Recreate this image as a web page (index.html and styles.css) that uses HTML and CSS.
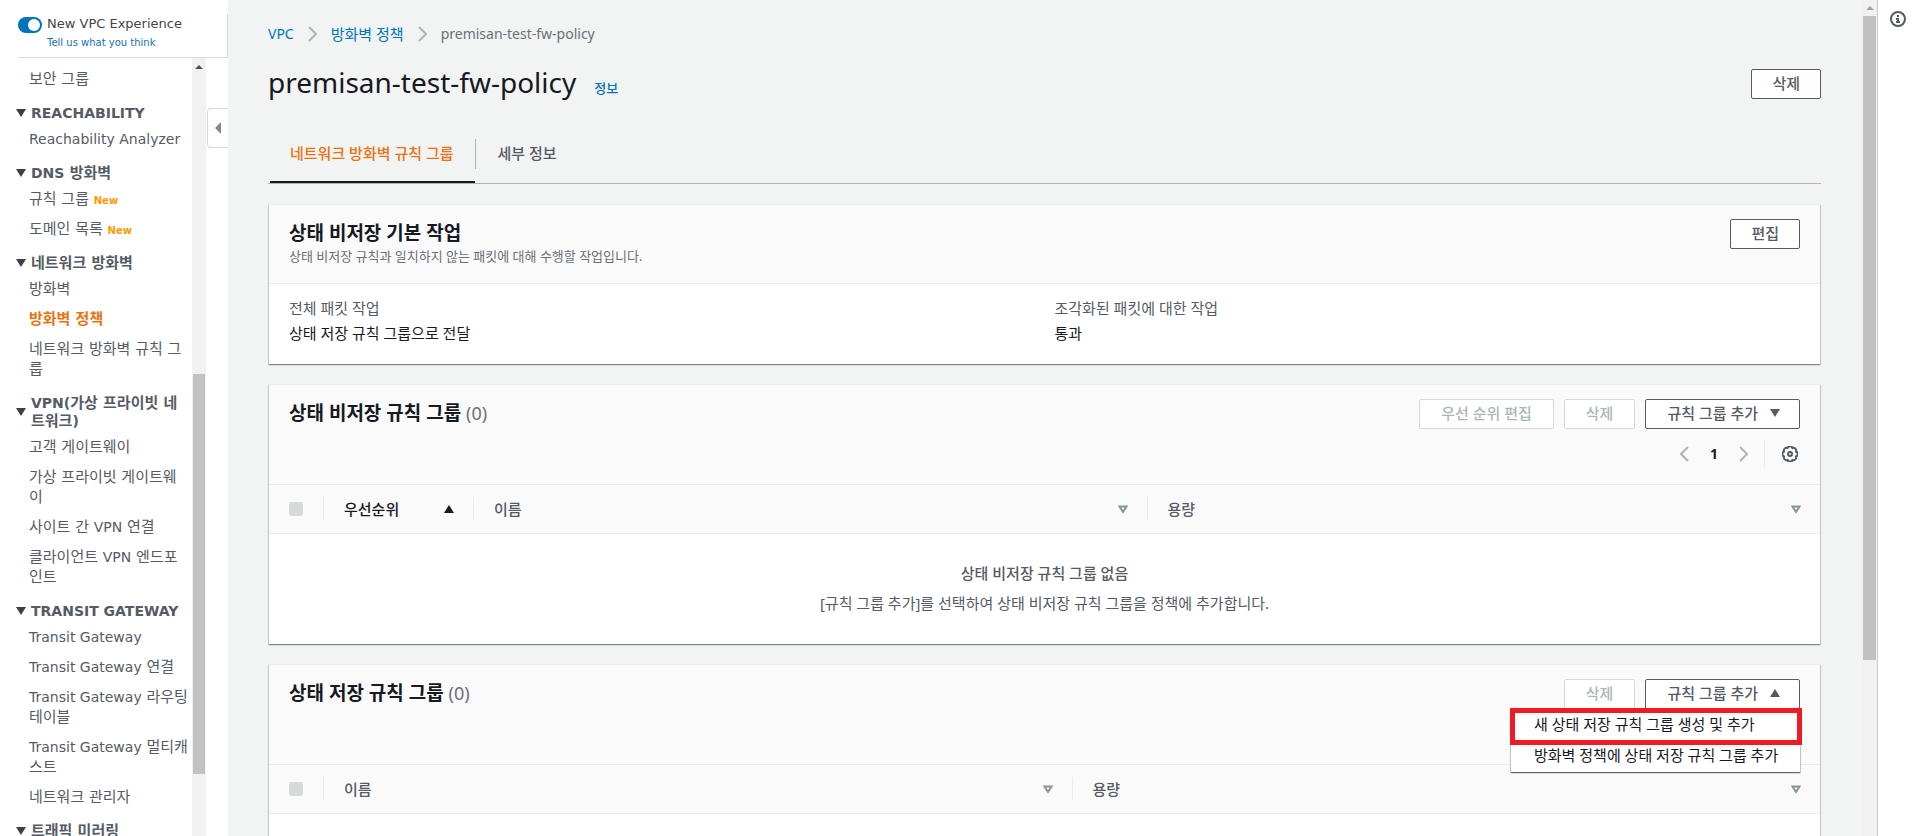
FILE: index.html
```html
<!DOCTYPE html>
<html lang="ko">

<head>
  <meta charset="UTF-8" />
  <meta name="viewport" content="width=device-width, initial-scale=1.0" />
  <title>premisan-test-fw-policy</title>
  <link rel="stylesheet" href="styles.css">
</head>

<body>
  <div class="app">
    <!-- 왼쪽 메뉴 -->
    <aside class="sidebar">
      <div class="side-top">
        <input type="checkbox" class="switch" id="newExp" checked>
        <div>
          <label for="newExp">New VPC Experience</label>
          <a href="#">Tell us what you think</a>
        </div>
      </div>
      <div class="side-body">
        <nav class="side-nav">
          <a href="#">보안 그룹</a>
          <h3><span class="en">REACHABILITY</span></h3>
          <a href="#"><span class="en">Reachability Analyzer</span></a>
          <h3><span><span class="en">DNS</span> 방화벽</span></h3>
          <a href="#">규칙 그룹 <span class="new">New</span></a>
          <a href="#">도메인 목록 <span class="new">New</span></a>
          <h3>네트워크 방화벽</h3>
          <a href="#">방화벽</a>
          <a href="#" class="current">방화벽 정책</a>
          <a href="#">네트워크 방화벽 규칙 그룹</a>
          <h3><span><span class="en">VPN(</span>가상 프라이빗 네트워크<span class="en">)</span></span></h3>
          <a href="#">고객 게이트웨이</a>
          <a href="#">가상 프라이빗 게이트웨이</a>
          <a href="#">사이트 간 <span class="en">VPN</span> 연결</a>
          <a href="#">클라이언트 <span class="en">VPN</span> 엔드포인트</a>
          <h3><span class="en">TRANSIT GATEWAY</span></h3>
          <a href="#"><span class="en">Transit Gateway</span></a>
          <a href="#"><span class="en">Transit Gateway</span> 연결</a>
          <a href="#"><span class="en">Transit Gateway</span> 라우팅 테이블</a>
          <a href="#"><span class="en">Transit Gateway</span> 멀티캐스트</a>
          <a href="#">네트워크 관리자</a>
          <h3>트래픽 미러링</h3>
        </nav>
        <div class="scrollbar side-scroll">
          <i class="arrow"></i>
          <div class="thumb"></div>
        </div>
        <div class="side-edge">
          <button class="collapse" aria-label="메뉴 닫기"></button>
        </div>
      </div>
    </aside>

    <!-- 본문 -->
    <main class="main">
      <nav class="crumbs">
        <a href="#" class="latin">VPC</a>
        <svg width="9" height="16" viewBox="0 0 9 16"><path d="M1 1l7 7-7 7" /></svg>
        <a href="#">방화벽 정책</a>
        <svg width="9" height="16" viewBox="0 0 9 16"><path d="M1 1l7 7-7 7" /></svg>
        <span class="latin">premisan-test-fw-policy</span>
      </nav>

      <div class="title">
        <h1>premisan-test-fw-policy</h1>
        <a href="#">정보</a>
        <button class="btn">삭제</button>
      </div>

      <div class="tabs">
        <button class="tab active">네트워크 방화벽 규칙 그룹</button>
        <button class="tab">세부 정보</button>
      </div>

      <section class="panel">
        <div class="panel-head">
          <div>
            <h2>상태 비저장 기본 작업</h2>
            <p>상태 비저장 규칙과 일치하지 않는 패킷에 대해 수행할 작업입니다.</p>
          </div>
          <button class="btn">편집</button>
        </div>
        <dl class="pairs">
          <div>
            <dt>전체 패킷 작업</dt>
            <dd>상태 저장 규칙 그룹으로 전달</dd>
          </div>
          <div>
            <dt>조각화된 패킷에 대한 작업</dt>
            <dd>통과</dd>
          </div>
        </dl>
      </section>

      <section class="panel">
        <div class="panel-head tall">
          <h2>상태 비저장 규칙 그룹 <span>(0)</span></h2>
          <div class="tools">
            <div class="btns">
              <button class="btn" disabled>우선 순위 편집</button>
              <button class="btn" disabled>삭제</button>
              <button class="btn">규칙 그룹 추가 <i class="caret"></i></button>
            </div>
            <div class="pager">
              <button aria-label="이전"><svg width="9" height="16" viewBox="0 0 9 16"><path d="M8 1L1 8l7 7" /></svg></button>
              <b>1</b>
              <button aria-label="다음"><svg width="9" height="16" viewBox="0 0 9 16"><path d="M1 1l7 7-7 7" /></svg></button>
              <button class="gear" aria-label="설정">
                <svg width="16" height="16" viewBox="-8 -8 16 16">
                  <path d="M-2.500-6A2.700 2.700 0 0 1 2.500-6A2.700 2.700 0 0 1 6-2.500A2.700 2.700 0 0 1 6 2.500A2.700 2.700 0 0 1 2.500 6A2.700 2.700 0 0 1-2.500 6A2.700 2.700 0 0 1-6 2.500A2.700 2.700 0 0 1-6-2.500A2.700 2.700 0 0 1-2.500-6Z" />
                  <circle r="2" />
                </svg>
              </button>
            </div>
          </div>
        </div>
        <table>
          <thead>
            <tr>
              <th class="check"><input type="checkbox" disabled aria-label="모두 선택"></th>
              <th class="priority sorted"><div>우선순위 <i class="caret up"></i></div></th>
              <th><div>이름 <svg width="10" height="9" viewBox="0 0 10 9"><path d="M1.500 1.500h7L5 7z" /></svg></div></th>
              <th><div>용량 <svg width="10" height="9" viewBox="0 0 10 9"><path d="M1.500 1.500h7L5 7z" /></svg></div></th>
            </tr>
          </thead>
          <tbody>
            <tr>
              <td colspan="4">
                <b>상태 비저장 규칙 그룹 없음</b>
                <p>[규칙 그룹 추가]를 선택하여 상태 비저장 규칙 그룹을 정책에 추가합니다.</p>
              </td>
            </tr>
          </tbody>
        </table>
      </section>

      <section class="panel">
        <div class="panel-head tall">
          <h2>상태 저장 규칙 그룹 <span>(0)</span></h2>
          <div class="btns">
            <button class="btn" disabled>삭제</button>
            <div class="dropdown">
              <button class="btn">규칙 그룹 추가 <i class="caret up"></i></button>
              <div class="menu">
                <button class="marked">새 상태 저장 규칙 그룹 생성 및 추가</button>
                <button>방화벽 정책에 상태 저장 규칙 그룹 추가</button>
              </div>
            </div>
          </div>
        </div>
        <table>
          <thead>
            <tr>
              <th class="check"><input type="checkbox" disabled aria-label="모두 선택"></th>
              <th><div>이름 <svg width="10" height="9" viewBox="0 0 10 9"><path d="M1.500 1.500h7L5 7z" /></svg></div></th>
              <th><div>용량 <svg width="10" height="9" viewBox="0 0 10 9"><path d="M1.500 1.500h7L5 7z" /></svg></div></th>
            </tr>
          </thead>
          <tbody>
            <tr>
              <td colspan="3"></td>
            </tr>
          </tbody>
        </table>
      </section>
    </main>

    <div class="scrollbar main-scroll">
      <i class="arrow"></i>
      <div class="thumb"></div>
    </div>

    <!-- 오른쪽 도움말 -->
    <aside class="help">
      <button aria-label="도움말">
        <svg width="16" height="16" viewBox="0 0 16 16">
          <circle cx="8" cy="8" r="7" />
          <path d="M8 4v2M6 8h2v3M6 11h4" />
        </svg>
      </button>
    </aside>
  </div>
</body>

</html>
```
FILE: styles.css
```css
* {
  margin: 0;
  padding: 0;
  box-sizing: border-box;
}

body {
  font-family: "Noto Sans", "Noto Sans CJK KR", sans-serif;
  font-size: 15px;
  line-height: 20px;
  color: #16191f;
  background: #fff;
}

a {
  color: #0073bb;
  text-decoration: none;
}

button {
  font: inherit;
  color: #545b64;
  background: none;
  border: none;
  cursor: pointer;
}

svg {
  display: block;
  fill: none;
  stroke: #aab7b8;
  stroke-width: 2;
}

.app {
  display: flex;
  height: 100vh;
  overflow: hidden;
}

/* 왼쪽 메뉴 */
.sidebar {
  display: flex;
  flex-direction: column;
  flex: 0 0 228px;
  font-family: "DejaVu Sans", "Noto Sans CJK KR", sans-serif;
}

.side-top {
  display: flex;
  gap: 5px;
  height: 44px;
  margin: 14px 0 0 18px;
  border-right: 1px solid #d5dbdb;
  border-bottom: 1px solid #d5dbdb;
}

.side-top label {
  display: block;
  font-size: 13px;
  color: #444;
}

.side-top a {
  display: block;
  font-size: 10px;
  line-height: 18px;
  color: #146eb4;
}

.switch {
  appearance: none;
  flex: none;
  width: 24px;
  height: 16px;
  margin-top: 3px;
  padding: 2px;
  border-radius: 8px;
  background: #0073bb;
}

.switch::before {
  content: "";
  display: block;
  width: 12px;
  height: 12px;
  margin-left: auto;
  border-radius: 50%;
  background: #fff;
}

.side-body {
  display: flex;
  flex: 1;
  min-height: 0;
}

.side-nav {
  flex: 1;
  padding: 6px 2px 0 16px;
  overflow: hidden;
  word-break: break-all;
  color: #545b64;
}

.side-nav a {
  display: block;
  padding: 5px 0 5px 13px;
  color: #545b64;
}

.side-nav a.current {
  font-weight: bold;
  color: #ec7211;
}

.side-nav .en {
  font-size: 14px;
}

.side-nav a .en {
  line-height: 16px;
}

.side-nav .new {
  font-size: 10px;
  font-weight: bold;
  line-height: 12px;
  color: #ff9900;
}

.side-nav h3 {
  display: flex;
  align-items: center;
  gap: 5px;
  padding: 10px 0 2px;
  font-size: 15px;
  line-height: 18px;
}

.side-nav h3::before {
  content: "";
  flex: none;
  border: 5px solid transparent;
  border-top: 8px solid #3b4048;
  border-bottom: 0;
}

.scrollbar {
  display: flex;
  flex-direction: column;
  align-items: center;
  flex: none;
  width: 14px;
  background: #f1f1f1;
}

.arrow {
  margin: 7px 0 5px;
  border: 4px solid transparent;
  border-top: 0;
  border-bottom-color: #505050;
}

.thumb {
  width: 12px;
  background: #c1c1c1;
}

.side-scroll .thumb {
  height: 400px;
  margin-top: 300px;
}

.side-edge {
  width: 22px;
  padding-top: 50px;
}

.collapse {
  display: flex;
  align-items: center;
  justify-content: center;
  width: 21px;
  height: 40px;
  margin-left: 1px;
  border: 1px solid #d5dbdb;
  border-right: 0;
  border-radius: 4px 0 0 4px;
}

.collapse::before {
  content: "";
  border: 6px solid transparent;
  border-left: 0;
  border-right-color: #888;
}

/* 본문 */
.main {
  flex: 1;
  min-width: 0;
  padding: 24px 41px 0 40px;
  overflow: hidden;
  background: #f2f3f3;
}

.crumbs {
  display: flex;
  align-items: center;
  gap: 14px;
  color: #687078;
}

.crumbs .latin {
  font-size: 14px;
}

.title {
  display: flex;
  align-items: center;
  gap: 18px;
  height: 40px;
  margin-top: 20px;
}

.title h1 {
  padding-bottom: 4px;
  font-size: 28px;
  font-weight: normal;
  line-height: 36px;
}

.title a {
  padding-top: 8px;
  font-size: 13px;
  font-weight: 500;
}

.title .btn {
  margin-left: auto;
}

.btn {
  display: flex;
  align-items: center;
  height: 30px;
  padding: 0 20px 2px;
  font-weight: 500;
  background: #fff;
  border: 1px solid #545b64;
  border-radius: 2px;
}

.btns .btn {
  padding: 0 21px 2px;
}

.btn:disabled {
  color: #aab7b8;
  border-color: #d5dbdb;
  cursor: default;
}

.caret {
  margin-left: 12px;
  border: 5px solid transparent;
  border-top: 8px solid #545b64;
  border-bottom: 0;
}

.caret.up {
  border-top: 0;
  border-bottom: 8px solid #545b64;
}

.btn .caret {
  margin-right: -2px;
}

.tabs {
  display: flex;
  height: 60px;
  margin-top: 20px;
  padding-left: 2px;
  border-bottom: 1px solid #aab7b8;
}

.tab {
  height: 30px;
  margin-top: 15px;
  padding: 0 22px 2px;
  font-weight: 500;
}

.tab.active {
  height: 59px;
  margin-top: 0;
  padding: 0 21px 0 20px;
  color: #ec7211;
  border-bottom: 2px solid #16191f;
}

.tab + .tab {
  border-left: 1px solid #aab7b8;
}

.panel {
  margin: 20px 1px 0;
  background: #fff;
  border-top: 1px solid #eaeded;
  box-shadow: 0 1px 1px 0 rgba(0, 28, 36, 0.3), 1px 1px 1px 0 rgba(0, 28, 36, 0.15), -1px 1px 1px 0 rgba(0, 28, 36, 0.15);
}

.panel-head {
  display: flex;
  justify-content: space-between;
  align-items: flex-start;
  min-height: 79px;
  padding: 14px 20px 0;
  background: #fafafa;
  border-bottom: 1px solid #eaeded;
}

.panel-head.tall {
  min-height: 100px;
}

h2 {
  font-size: 19px;
  font-weight: bold;
  line-height: 28px;
}

h2 span {
  font-size: 18px;
  font-weight: normal;
  color: #687078;
}

.panel-head p {
  font-size: 13px;
  line-height: 18px;
  color: #687078;
}

.pairs {
  display: grid;
  grid-template-columns: 1fr 1fr;
  gap: 20px;
  padding: 12px 20px 18px;
  line-height: 25px;
}

.pairs dt {
  color: #545b64;
}

.btns {
  display: flex;
  justify-content: flex-end;
  gap: 10px;
}

.pager {
  display: flex;
  align-items: center;
  justify-content: flex-end;
  gap: 21px;
  height: 30px;
  margin-top: 10px;
  font-size: 14px;
}

.pager .gear {
  height: 30px;
  margin-left: -5px;
  padding: 0 2px 0 17px;
  border-left: 1px solid #eaeded;
}

.gear svg {
  stroke: #545b64;
}

table {
  width: 100%;
  table-layout: fixed;
  border-collapse: separate;
  border-spacing: 0;
}

th {
  height: 49px;
  font-weight: 500;
  color: #545b64;
  text-align: left;
  background: #fafafa;
  border-bottom: 1px solid #eaeded;
}

th.check {
  width: 54px;
  padding-left: 20px;
}

th.priority {
  width: 150px;
}

th.sorted {
  color: #16191f;
}

th.sorted .caret {
  border-bottom-color: #16191f;
}

th div {
  display: flex;
  align-items: center;
  justify-content: space-between;
  height: 24px;
  padding: 0 19px 0 20px;
  border-left: 1px solid #eaeded;
}

th svg {
  stroke: #879596;
}

th input {
  appearance: none;
  display: block;
  width: 14px;
  height: 14px;
  border-radius: 2px;
  background: #d5dbdb;
}

td {
  height: 110px;
  padding-bottom: 2px;
  color: #545b64;
  text-align: center;
}

td b {
  font-weight: 500;
}

td p {
  margin-top: 10px;
}

.dropdown {
  position: relative;
}

.menu {
  position: absolute;
  top: 30px;
  right: 0;
  z-index: 1;
  width: 289px;
  padding-bottom: 1px;
  background: #fff;
  box-shadow: 0 1px 1px 0 rgba(0, 28, 36, 0.5), 1px 1px 1px 0 rgba(0, 28, 36, 0.15), -1px 1px 1px 0 rgba(0, 28, 36, 0.15);
}

.menu button {
  display: block;
  width: 100%;
  height: 31px;
  padding: 0 0 2px 23px;
  color: #16191f;
  text-align: left;
  white-space: nowrap;
}

.menu .marked {
  position: relative;
}

.menu .marked::after {
  content: "";
  position: absolute;
  inset: -1px -2px -5px -1px;
  border: 5px solid #ed1c24;
}

.main-scroll {
  width: 16px;
  border-right: 1px solid #ccc;
}

.main-scroll .arrow {
  margin: 6px 0;
  border-bottom-color: #a3a3a3;
}

.main-scroll .thumb {
  width: 13px;
  height: 644px;
}

/* 오른쪽 도움말 */
.help {
  flex: 0 0 39px;
  padding: 11px 0 0 12px;
}

.help svg {
  stroke: #545b64;
}
```
